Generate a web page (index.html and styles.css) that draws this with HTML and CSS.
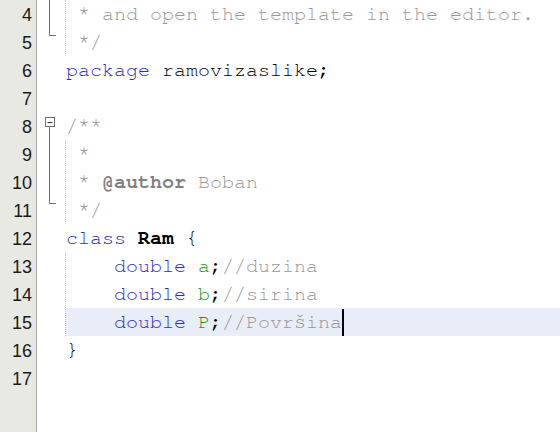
FILE: index.html
```html
<!DOCTYPE html>
<html>
<head>
<meta charset="utf-8">
<link rel="stylesheet" href="styles.css">
</head>
<body>
<div class="editor">
  <div class="gutter">
    <div class="num">4</div>
    <div class="num">5</div>
    <div class="num">6</div>
    <div class="num">7</div>
    <div class="num">8</div>
    <div class="num">9</div>
    <div class="num">10</div>
    <div class="num">11</div>
    <div class="num">12</div>
    <div class="num">13</div>
    <div class="num">14</div>
    <div class="num">15</div>
    <div class="num">16</div>
    <div class="num">17</div>
  </div>
  <div class="folds">
    <svg width="29" height="432" viewBox="0 0 29 432">
      <path d="M12.5 0 V35.5 H19" fill="none" stroke="#6e6e6e" stroke-width="1"/>
      <rect x="8.5" y="117.5" width="9" height="9" fill="#fff" stroke="#6e6e6e" stroke-width="1"/>
      <path d="M10.5 122.5 H15.5" stroke="#333" stroke-width="1"/>
      <path d="M12.5 127 V203.5 H19" fill="none" stroke="#6e6e6e" stroke-width="1"/>
    </svg>
  </div>
  <div class="code">
    <div class="guide">
      <div class="line cm"> * and open the template in the editor.</div>
      <div class="line cm"> */</div>
    </div>
    <div class="line"><span class="kw">package</span> ramovizaslike;</div>
    <div class="line"></div>
    <div class="line cm">/**</div>
    <div class="guide">
      <div class="line cm"> *</div>
      <div class="line cm"> * <b class="tag">@author</b> Boban</div>
      <div class="line cm"> */</div>
    </div>
    <div class="line"><span class="kw">class</span> <b>Ram</b> {</div>
    <div class="guide">
      <div class="line">    <span class="kw">double</span> <span class="fld">a</span>;<span class="cm">//duzina</span></div>
      <div class="line">    <span class="kw">double</span> <span class="fld">b</span>;<span class="cm">//sirina</span></div>
      <div class="line current">    <span class="kw">double</span> <span class="fld">P</span>;<span class="cm">//Površina</span><span class="caret"></span></div>
    </div>
    <div class="line">}</div>
    <div class="line"></div>
  </div>
</div>
</body>
</html>
```

FILE: styles.css
```css
html, body {
  margin: 0;
  padding: 0;
  background: #ffffff;
}
.editor {
  display: flex;
  width: 560px;
  height: 432px;
  overflow: hidden;
}
.gutter {
  width: 36px;
  flex: 0 0 36px;
  background: #e9e9e4;
  border-right: 1px solid #a6a6a6;
  padding-top: 1px;
  box-sizing: content-box;
}
.num {
  height: 28px;
  line-height: 28px;
  text-align: right;
  padding-right: 4px;
  font-family: "Liberation Sans", Arial, sans-serif;
  font-size: 18px;
  color: #1a1a1a;
}
.folds {
  width: 29px;
  flex: 0 0 29px;
  display: flex;
}
.folds svg {
  display: block;
}
.code {
  flex: 1;
  padding-top: 0;
  font-family: "Nimbus Mono PS", "Nimbus Mono L", "FreeMono", "Courier New", "Liberation Mono", monospace;
  font-size: 20px;
  color: #000;
}
.line {
  height: 28px;
  line-height: 28px;
  white-space: pre;
}
.guide {
  border-left: 1px dotted #c8c8c8;
  margin-left: -1px;
}
.cm {
  color: #969696;
}
.tag {
  color: #808080;
  font-weight: bold;
}
.kw {
  color: #2a2ac8;
}
.fld {
  color: #119911;
}
.current {
  background: #e8edf7;
}
.caret {
  display: inline-block;
  width: 2px;
  height: 27px;
  background: #000;
  vertical-align: middle;
  margin-top: -2px;
}
```
